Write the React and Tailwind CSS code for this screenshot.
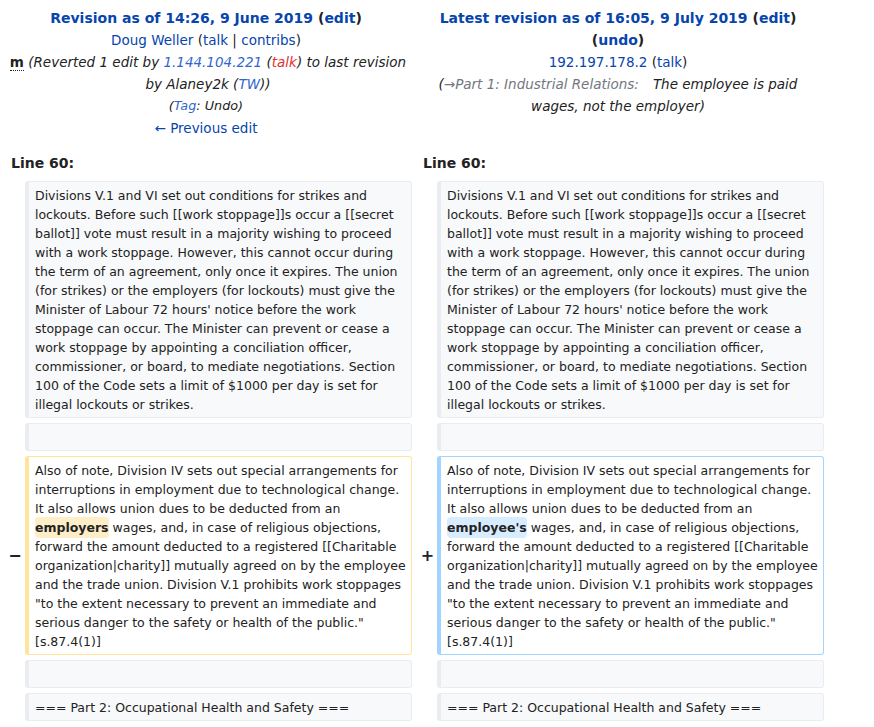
const font = { fontFamily: '"DejaVu Sans", Verdana, sans-serif' };

const contextLines = [
  'Divisions V.1 and VI set out conditions for strikes and',
  'lockouts. Before such [[work stoppage]]s occur a [[secret',
  'ballot]] vote must result in a majority wishing to proceed',
  'with a work stoppage. However, this cannot occur during',
  'the term of an agreement, only once it expires. The union',
  '(for strikes) or the employers (for lockouts) must give the',
  "Minister of Labour 72 hours' notice before the work",
  'stoppage can occur. The Minister can prevent or cease a',
  'work stoppage by appointing a conciliation officer,',
  'commissioner, or board, to mediate negotiations. Section',
  '100 of the Code sets a limit of $1000 per day is set for',
  'illegal lockouts or strikes.',
];

const headLines = [
  'Also of note, Division IV sets out special arrangements for',
  'interruptions in employment due to technological change.',
  'It also allows union dues to be deducted from an',
];

const tailLines = [
  'forward the amount deducted to a registered [[Charitable',
  'organization|charity]] mutually agreed on by the employee',
  'and the trade union. Division V.1 prohibits work stoppages',
  '"to the extent necessary to prevent an immediate and',
  'serious danger to the safety or health of the public."',
  '[s.87.4(1)]',
];

const boxText = 'px-[6px] py-[3.5px] text-[12.5px] leading-[19px] text-[#222] whitespace-nowrap';

const Context = ({ lines = [] }) => (
  <div className={`rounded-[3px] border border-l-4 border-[#eaecf0] bg-[#f8f9fa] ${boxText}`}>
    {lines.length ? lines.map((line) => <div key={line}>{line}</div>) : <div>{'\u00a0'}</div>}
  </div>
);

const Changed = ({ side, word }) => (
  <div
    className={`rounded-[3px] border border-l-4 bg-white ${boxText} ${
      side === 'old' ? 'border-[#ffe49c]' : 'border-[#a3d3ff]'
    }`}
  >
    {headLines.map((line) => (
      <div key={line}>{line}</div>
    ))}
    <div>
      <span className={`rounded-[4px] py-[3px] font-bold ${side === 'old' ? 'bg-[#feeec8]' : 'bg-[#d8ecff]'}`}>
        {word}
      </span>{' '}
      wages, and, in case of religious objections,
    </div>
    {tailLines.map((line) => (
      <div key={line}>{line}</div>
    ))}
  </div>
);

const Link = ({ children, className = 'text-[#0645ad]' }) => (
  <a href="#" className={className}>
    {children}
  </a>
);

export default function App() {
  return (
    <div style={font} className="min-h-[727px] w-[874px] bg-white text-[#222]">
      <div className="grid w-[824px] grid-cols-[25px_387px_25px_387px] gap-y-[5px]">
        {/* header */}
        <div className="col-span-2 px-[5px] pt-[7px] text-center text-[13.5px] leading-[22px]">
          <div className="text-[14px] font-bold">
            <Link>Revision as of 14:26, 9 June 2019</Link> (<Link>edit</Link>)
          </div>
          <div>
            <Link>Doug Weller</Link> (<Link>talk</Link> | <Link>contribs</Link>)
          </div>
          <div className="pl-[4px]">
            <abbr className="font-bold no-underline [border-bottom:1px_dotted_#222]" title="This is a minor edit">
              m
            </abbr>{' '}
            <span className="italic">
              (Reverted 1 edit by <Link className="text-[#3366cc]">1.144.104.221</Link> (
              <Link className="text-[#d33]">talk</Link>) to last revision
              <br />
              by Alaney2k (<Link className="text-[#3366cc]">TW</Link>))
            </span>
          </div>
          <div className="text-[12.8px] italic">
            (<Link className="text-[#3366cc]">Tag</Link>: Undo)
          </div>
          <div>
            <Link>← Previous edit</Link>
          </div>
        </div>
        <div className="col-span-2 px-[5px] pt-[7px] text-center text-[13.5px] leading-[22px]">
          <div className="text-[14px] font-bold">
            <Link>Latest revision as of 16:05, 9 July 2019</Link> (<Link>edit</Link>)
            <br />(<Link>undo</Link>)
          </div>
          <div>
            <Link>192.197.178.2</Link> (<Link>talk</Link>)
          </div>
          <div className="italic">
            (<span className="text-[#72777d]">
              <Link className="text-[#72777d]">→</Link>Part 1: Industrial Relations:
            </span>
            <span className="ml-[14px]">The employee is paid</span>
            <br />
            wages, not the employer)
          </div>
        </div>

        {/* line numbers */}
        <div className="col-span-2 pl-[11px] pt-[8px] pb-[2px] text-[14px] font-bold leading-[22px]">Line 60:</div>
        <div className="col-span-2 pl-[11px] pt-[8px] pb-[2px] text-[14px] font-bold leading-[22px]">Line 60:</div>

        {/* context paragraph */}
        <div />
        <Context lines={contextLines} />
        <div />
        <Context lines={contextLines} />

        <div />
        <Context />
        <div />
        <Context />

        {/* changed paragraph */}
        <div className="flex items-center justify-center pl-[5px] text-[16px] font-bold">−</div>
        <Changed side="old" word="employers" />
        <div className="flex items-center justify-center pl-[6px] text-[16px] font-bold">+</div>
        <Changed side="new" word="employee's" />

        <div />
        <Context />
        <div />
        <Context />

        <div />
        <Context lines={['=== Part 2: Occupational Health and Safety ===']} />
        <div />
        <Context lines={['=== Part 2: Occupational Health and Safety ===']} />
      </div>
    </div>
  );
}
